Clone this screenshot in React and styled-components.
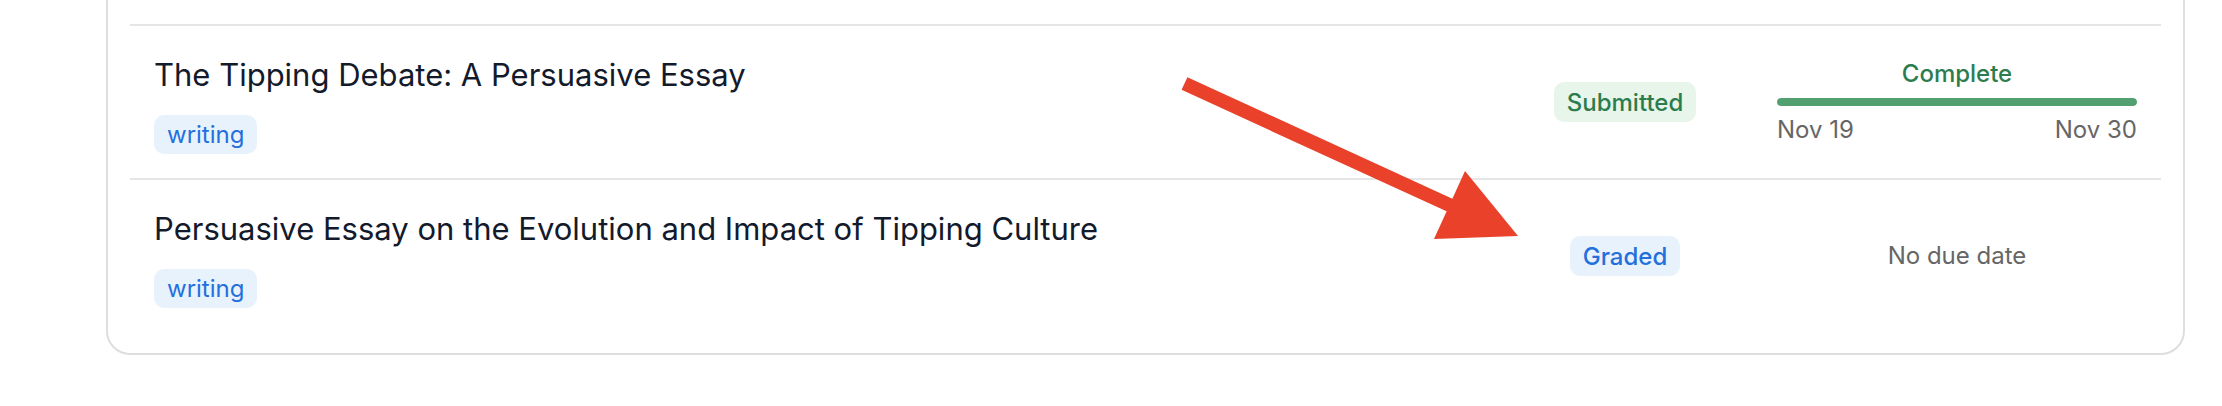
import React from "react"
import styled, { createGlobalStyle } from "styled-components"

const GlobalStyle = createGlobalStyle`
  html, body {
    margin: 0;
    padding: 0;
    background: #ffffff;
  }
  body {
    font-family: Inter, "Noto Sans", "Liberation Sans", sans-serif;
    -webkit-font-smoothing: antialiased;
  }
`

const Page = styled.div`
  position: relative;
  width: 2222px;
  height: 406px;
  overflow: hidden;
  padding-left: 106px;
  box-sizing: border-box;
`

const Card = styled.div`
  width: 2079px;
  box-sizing: border-box;
  background: #fff;
  border: 2px solid #dedede;
  border-top: none;
  border-radius: 0 0 24px 24px;
  padding: 24px 22px 21px;
`

const Row = styled.div`
  display: grid;
  grid-template-columns: 1fr 208px 360px;
  column-gap: 48px;
  align-items: center;
  height: 154px;
  box-sizing: border-box;
  padding: 0 24px;
  border-top: 2px solid #e6e6e6;
`

const Info = styled.div`
  display: flex;
  flex-direction: column;
  align-items: flex-start;
  gap: 16px;
`

const Title = styled.div`
  font-size: 31px;
  line-height: 48px;
  font-weight: 400;
  color: #131a2b;
  white-space: nowrap;
`

const Tag = styled.span`
  display: inline-flex;
  align-items: center;
  height: 39px;
  padding: 0 13px;
  border-radius: 10px;
  background: #e8f2fd;
  color: #2370dc;
  font-size: 24px;
`

const StatusCell = styled.div`
  display: flex;
  justify-content: center;
`

const Badge = styled.span`
  display: inline-flex;
  align-items: center;
  height: 40px;
  padding: 0 13px;
  border-radius: 10px;
  font-size: 24px;
  font-weight: 500;
  background: ${(p) => (p.$tone === "green" ? "#e7f5eb" : "#e8f2fd")};
  color: ${(p) => (p.$tone === "green" ? "#2c7d4e" : "#2370dc")};
`

const Due = styled.div`
  display: flex;
  flex-direction: column;
  gap: 9px;
`

const DueLabel = styled.div`
  text-align: center;
  font-size: 24px;
  line-height: 30px;
  font-weight: 500;
  color: #2c7d4e;
`

const Track = styled.div`
  height: 8px;
  border-radius: 4px;
  background: #e3e3e3;
  overflow: hidden;
`

const Fill = styled.div`
  height: 100%;
  border-radius: 4px;
  background: #52a06f;
`

const Dates = styled.div`
  display: flex;
  justify-content: space-between;
  font-size: 24px;
  line-height: 30px;
  color: #666;
`

const NoDue = styled.div`
  text-align: center;
  font-size: 24px;
  line-height: 30px;
  color: #666;
`

const Annotation = styled.svg`
  position: absolute;
  left: 0;
  top: 0;
  pointer-events: none;
`

const Arrow = () => (
  <Annotation width="2222" height="406" viewBox="0 0 2222 406">
    <line
      x1="1184.5"
      y1="83.5"
      x2="1456"
      y2="208"
      stroke="#e9412a"
      strokeWidth="14"
    />
    <polygon points="1465,171 1518,236 1434,239" fill="#e9412a" />
  </Annotation>
)

const assignments = [
  {
    title: "The Tipping Debate: A Persuasive Essay",
    tag: "writing",
    status: "Submitted",
    tone: "green",
    due: { label: "Complete", start: "Nov 19", end: "Nov 30", progress: 100 },
  },
  {
    title: "Persuasive Essay on the Evolution and Impact of Tipping Culture",
    tag: "writing",
    status: "Graded",
    tone: "blue",
    due: null,
  },
]

export default function App() {
  return (
    <Page>
      <GlobalStyle />
      <Card>
        {assignments.map((a) => (
          <Row key={a.title}>
            <Info>
              <Title>{a.title}</Title>
              <Tag>{a.tag}</Tag>
            </Info>
            <StatusCell>
              <Badge $tone={a.tone}>{a.status}</Badge>
            </StatusCell>
            {a.due ? (
              <Due>
                <DueLabel>{a.due.label}</DueLabel>
                <Track>
                  <Fill style={{ width: `${a.due.progress}%` }} />
                </Track>
                <Dates>
                  <span>{a.due.start}</span>
                  <span>{a.due.end}</span>
                </Dates>
              </Due>
            ) : (
              <NoDue>No due date</NoDue>
            )}
          </Row>
        ))}
      </Card>
      <Arrow />
    </Page>
  )
}
